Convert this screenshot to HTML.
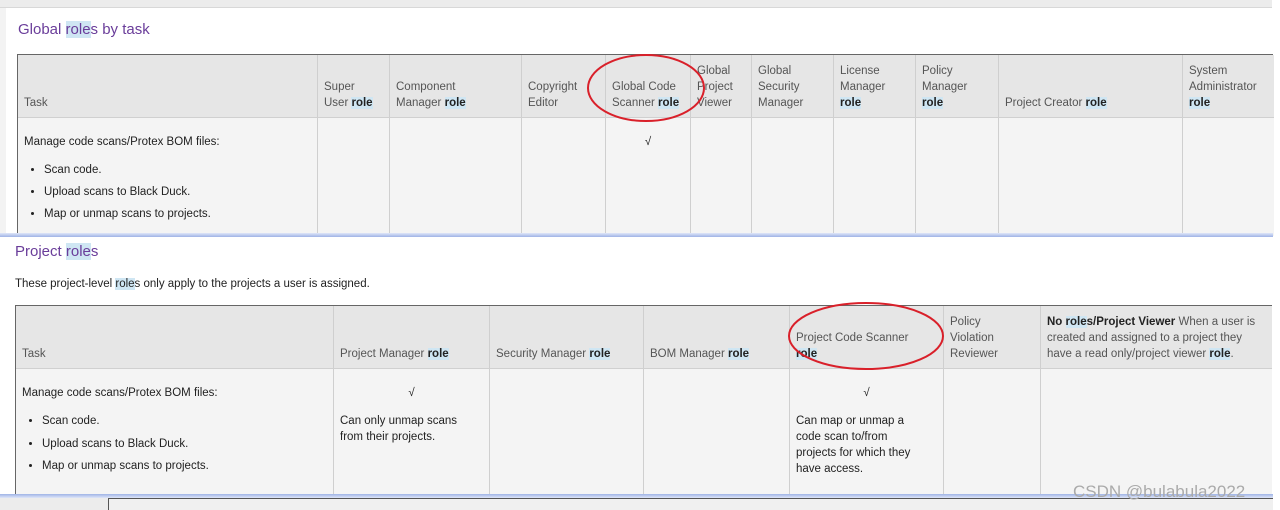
<!DOCTYPE html>
<html><head><meta charset="utf-8"><style>
*{margin:0;padding:0;box-sizing:border-box}
body{width:1280px;height:510px;background:#fff;position:relative;overflow:hidden;font-family:"Liberation Sans",sans-serif;font-size:11.5px;color:#333}
.a{position:absolute}
.h{background:#cfe6f3}
.b{font-weight:bold;color:#222}
.title{color:#6a3d9a;font-size:15px}
.cell{position:absolute;border-right:1px solid #cfcfcf;padding:4px 6px;line-height:16px}
.hd{background:#e6e6e6;color:#555;display:flex;align-items:flex-end;padding-bottom:6px}
.bd{background:#f4f4f4;color:#222}
ul{margin:12px 0 0 14px}
li{margin:0 0 6px 6px}
.t2 li{margin-bottom:6.5px}
</style></head><body>
<div class="a" style="left:0;top:0;width:1272px;height:8px;background:#ececec;border-bottom:1px solid #d8d8d8"></div>
<div class="a" style="left:0;top:8px;width:6px;height:228px;background:#f3f3f3"></div>
<div class="a title" style="left:18px;top:21px">Global <span class="h">role</span>s by task</div>

<div class="a" style="left:17px;top:54px;width:1256px;height:180px;border-top:1px solid #666;border-left:1px solid #666">
<div class="cell hd" style="left:0;top:0;width:300px;height:62px"><span>Task</span></div>
<div class="cell hd" style="left:300px;top:0;width:72px;height:62px"><span>Super<br>User <span class="h b">role</span></span></div>
<div class="cell hd" style="left:372px;top:0;width:132px;height:62px"><span>Component<br>Manager <span class="h b">role</span></span></div>
<div class="cell hd" style="left:504px;top:0;width:84px;height:62px"><span>Copyright Editor</span></div>
<div class="cell hd" style="left:588px;top:0;width:85px;height:62px"><span>Global Code Scanner <span class="h b">role</span></span></div>
<div class="cell hd" style="left:673px;top:0;width:61px;height:62px"><span>Global Project Viewer</span></div>
<div class="cell hd" style="left:734px;top:0;width:82px;height:62px"><span>Global Security Manager</span></div>
<div class="cell hd" style="left:816px;top:0;width:82px;height:62px"><span>License Manager <span class="h b">role</span></span></div>
<div class="cell hd" style="left:898px;top:0;width:83px;height:62px"><span>Policy<br>Manager<br><span class="h b">role</span></span></div>
<div class="cell hd" style="left:981px;top:0;width:184px;height:62px"><span>Project Creator <span class="h b">role</span></span></div>
<div class="cell hd" style="left:1165px;top:0;width:91px;height:62px;border-right:none"><span>System Administrator <span class="h b">role</span></span></div>
<div class="a" style="left:0;top:62px;width:1256px;height:1px;background:#d0d0d0"></div>
<div class="cell bd" style="left:0;top:63px;width:300px;height:118px;padding-top:16px">Manage code scans/Protex BOM files:<ul><li>Scan code.</li><li>Upload scans to Black Duck.</li><li>Map or unmap scans to projects.</li></ul></div>
<div class="cell bd" style="left:300px;top:63px;width:72px;height:118px"></div>
<div class="cell bd" style="left:372px;top:63px;width:132px;height:118px"></div>
<div class="cell bd" style="left:504px;top:63px;width:84px;height:118px"></div>
<div class="cell bd" style="left:588px;top:63px;width:85px;height:118px;text-align:center;padding-top:16px">√</div>
<div class="cell bd" style="left:673px;top:63px;width:61px;height:118px"></div>
<div class="cell bd" style="left:734px;top:63px;width:82px;height:118px"></div>
<div class="cell bd" style="left:816px;top:63px;width:82px;height:118px"></div>
<div class="cell bd" style="left:898px;top:63px;width:83px;height:118px"></div>
<div class="cell bd" style="left:981px;top:63px;width:184px;height:118px"></div>
<div class="cell bd" style="left:1165px;top:63px;width:91px;height:118px;border-right:none"></div>
</div>
<div class="a" style="left:0;top:233px;width:1273px;height:4px;background:linear-gradient(#dfe6f8,#9fb3e6)"></div>

<div class="a title" style="left:15px;top:243px">Project <span class="h">role</span>s</div>
<div class="a" style="left:15px;top:278px;color:#222">These project-level <span class="h">role</span>s only apply to the projects a user is assigned.</div>
<div class="a t2" style="left:15px;top:305px;width:1257px;height:190px;border-top:1px solid #666;border-left:1px solid #666;border-right:1px solid #666">
<div class="cell hd" style="left:0;top:0;width:318px;height:62px"><span>Task</span></div>
<div class="cell hd" style="left:318px;top:0;width:156px;height:62px"><span>Project Manager <span class="h b">role</span></span></div>
<div class="cell hd" style="left:474px;top:0;width:154px;height:62px"><span>Security Manager <span class="h b">role</span></span></div>
<div class="cell hd" style="left:628px;top:0;width:146px;height:62px"><span>BOM Manager <span class="h b">role</span></span></div>
<div class="cell hd" style="left:774px;top:0;width:154px;height:62px"><span>Project Code Scanner<br><span class="h b">role</span></span></div>
<div class="cell hd" style="left:928px;top:0;width:97px;height:62px"><span>Policy<br>Violation<br>Reviewer</span></div>
<div class="cell hd" style="left:1025px;top:0;width:231px;height:62px;border-right:none"><span><span class="b">No <span class="h">role</span>s/Project Viewer</span> When a user is created and assigned to a project they have a read only/project viewer <span class="h b">role</span>.</span></div>
<div class="a" style="left:0;top:62px;width:1256px;height:1px;background:#d0d0d0"></div>
<div class="cell bd" style="left:0;top:63px;width:318px;height:127px;padding-top:16px">Manage code scans/Protex BOM files:<ul><li>Scan code.</li><li>Upload scans to Black Duck.</li><li>Map or unmap scans to projects.</li></ul></div>
<div class="cell bd" style="left:318px;top:63px;width:156px;height:127px;padding-top:16px"><div style="text-align:center;margin-bottom:12px">√</div>Can only unmap scans<br>from their projects.</div>
<div class="cell bd" style="left:474px;top:63px;width:154px;height:127px"></div>
<div class="cell bd" style="left:628px;top:63px;width:146px;height:127px"></div>
<div class="cell bd" style="left:774px;top:63px;width:154px;height:127px;padding-top:16px"><div style="text-align:center;margin-bottom:12px">√</div>Can map or unmap a<br>code scan to/from<br>projects for which they<br>have access.</div>
<div class="cell bd" style="left:928px;top:63px;width:97px;height:127px"></div>
<div class="cell bd" style="left:1025px;top:63px;width:231px;height:127px;border-right:none"></div>
</div>
<div class="a" style="left:0;top:494px;width:1273px;height:4px;background:linear-gradient(#9fb3e6,#dfe6f8)"></div>
<div class="a" style="left:0;top:498px;width:1273px;height:12px;background:#ececec"></div>
<div class="a" style="left:108px;top:498px;width:1165px;height:12px;border-left:1px solid #555;border-top:1px solid #555;background:#f0f0f0"></div>
<div class="a" style="left:1073px;top:482px;color:#aaa;font-size:17px">CSDN @bulabula2022</div>

<svg class="a" style="left:0;top:0" width="1280" height="510">
<ellipse cx="646" cy="88" rx="58" ry="33" fill="none" stroke="#d9202a" stroke-width="2"/>
<ellipse cx="866" cy="336" rx="77" ry="33" fill="none" stroke="#d9202a" stroke-width="2"/>
</svg>
</body></html>
